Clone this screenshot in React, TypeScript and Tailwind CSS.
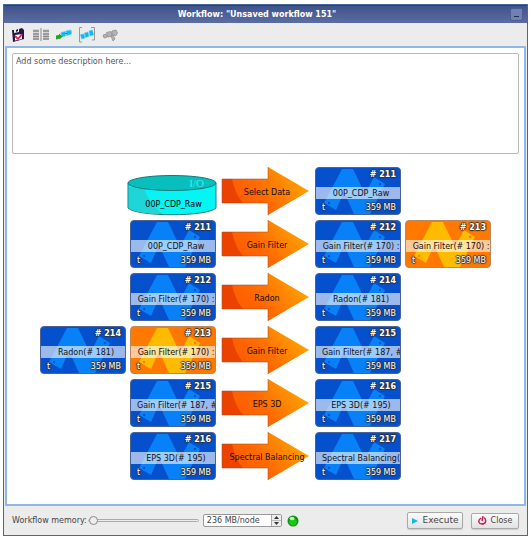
import React, { useState } from "react";

type Tone = "blue" | "orange";
type Data = { id: number; label: string; tone?: Tone };
type Step = { extra?: Data; input?: Data; process: string; output: Data; branch?: Data };

const steps: Step[] = [
  { process: "Select Data", output: { id: 211, label: "00P_CDP_Raw" } },
  {
    input: { id: 211, label: "00P_CDP_Raw" },
    process: "Gain Filter",
    output: { id: 212, label: "Gain Filter(# 170) :" },
    branch: { id: 213, label: "Gain Filter(# 170) :", tone: "orange" },
  },
  { input: { id: 212, label: "Gain Filter(# 170) :" }, process: "Radon", output: { id: 214, label: "Radon(# 181)" } },
  {
    extra: { id: 214, label: "Radon(# 181)" },
    input: { id: 213, label: "Gain Filter(# 170) :", tone: "orange" },
    process: "Gain Filter",
    output: { id: 215, label: "Gain Filter(# 187, #" },
  },
  { input: { id: 215, label: "Gain Filter(# 187, #" }, process: "EPS 3D", output: { id: 216, label: "EPS 3D(# 195)" } },
  { input: { id: 216, label: "EPS 3D(# 195)" }, process: "Spectral Balancing", output: { id: 217, label: "Spectral Balancing(" } },
];

const outline = "[text-shadow:1px_0_1px_#333,-1px_0_1px_#333,0_1px_1px_#333,0_-1px_1px_#333]";

function DataCard({ id, label, tone = "blue" }: Data) {
  const orange = tone === "orange";
  return (
    <div
      className={`relative h-12 overflow-hidden rounded border ${
        orange ? "border-[#b9855c] bg-[#ff7800]" : "border-[#4a6296] bg-[#0550cc]"
      }`}
    >
      <svg viewBox="0 0 86 48" className="absolute -inset-px h-12 w-[86px]" aria-hidden="true">
        <path d="M27 2H38L50 27L59 10L70 17L55 47H39L29 25L21 43L9 36Z" fill={orange ? "#ffbb00" : "#0880f8"} />
        <g fill={orange ? "#ff7800" : "#0550cc"}>
          <circle cx="14" cy="36" r="1.2" />
          <circle cx="65" cy="17" r="1.2" />
        </g>
      </svg>
      <div className="relative flex h-full flex-col">
        <div className={`h-[19px] pr-1 text-right font-bold leading-[13px] text-white ${outline}`}># {id}</div>
        <div className="flex h-3 overflow-hidden bg-white/60 pl-1.5 leading-[13px] text-[#111]">
          <span className="mx-auto whitespace-nowrap">{label}</span>
        </div>
        <div className={`flex flex-1 items-end justify-between pl-1.5 pr-1 leading-3 text-white ${outline}`}>
          <span>t</span>
          <span>359 MB</span>
        </div>
      </div>
    </div>
  );
}

function Source() {
  return (
    <div className="relative -ml-[3px] h-12">
      <svg viewBox="0 0 90 49" className="absolute inset-0 h-[49px] w-[90px]" aria-hidden="true">
        <path d="M1 16V41C10 50 80 50 89 41V16Z" fill="#05f5f5" stroke="#287878" />
        <path d="M2 20V41C8 45 20 47 36 47Q25 40 17 22Z" fill="#20d5d8" />
        <ellipse cx="45" cy="16" rx="44" ry="7.5" fill="#08bfbd" stroke="#187878" />
      </svg>
      <div className="relative flex h-full flex-col justify-between pb-1 pt-2.5">
        <span className="pr-3 text-right font-['Liberation_Serif',serif] text-[11px] leading-3 text-[#3deeee]">I/O</span>
        <span className="pl-1 text-center leading-3 text-black">00P_CDP_Raw</span>
      </div>
    </div>
  );
}

function ProcessArrow({ label }: { label: string }) {
  return (
    <div className="relative flex h-12 items-center justify-center">
      <svg viewBox="0 0 91 48" className="absolute inset-0 h-12 w-[91px]" aria-hidden="true">
        <defs>
          <linearGradient id="arrowFill" x1="0" y1="0.7" x2="1" y2="0.3">
            <stop offset="0" stopColor="#ff5500" />
            <stop offset="0.45" stopColor="#ff6a00" />
            <stop offset="1" stopColor="#ffa800" />
          </linearGradient>
        </defs>
        <path d="M2 12H48V0L89 24L48 48V36H2Z" fill="url(#arrowFill)" />
        <path d="M2 12H12Q15 27 23 36H2Z" fill="#ec4200" />
        <path d="M2 12H48V0M2 12V36H48V48" fill="none" stroke="#a05030" strokeOpacity="0.55" />
      </svg>
      <span className="relative whitespace-nowrap pl-[3px] pt-1 leading-3 text-[#111]">{label}</span>
    </div>
  );
}

const toolIcons: { name: string; art: React.ReactNode }[] = [
  {
    name: "Save workflow",
    art: (
      <>
        <path d="M2 3L4 3V6L9 5V2L12 1L14 3V12L3 15Z" fill="#1f1b45" />
        <path d="M6 3L8 2V4L6 5Z" fill="#1f1b45" />
        <path d="M5 8L12 7V12L5 13.5Z" fill="#fff" />
        <path d="M5 9L8 12L12 7" fill="none" stroke="#ec1650" strokeWidth="1.8" />
      </>
    ),
  },
  {
    name: "Compare",
    art: (
      <>
        <path d="M0 2H6V13H0ZM10 2H16V13H10Z" fill="#d6d6d6" />
        <path d="M0 4H6M0 7H6M0 9.5H6M0 12H6M10 4H16M10 7H16M10 9.5H16M10 12H16" stroke="#888" strokeWidth="1.3" />
        <path d="M8 1V14" stroke="#888" />
      </>
    ),
  },
  {
    name: "Append step",
    art: (
      <>
        <path d="M5 5.5L9.5 4.5V9L5.5 10ZM10 4L15 3L15.500 7L10.500 8.500Z" fill="#12b4f5" stroke="#55cfff" strokeWidth="0.8" />
        <path d="M0 8.500L3 8V6.500L6.500 9.500L3.500 12.500V11.500L0 12.500Z" fill="#18a91c" />
        <path d="M9 6.500H11" stroke="#178abf" />
      </>
    ),
  },
  {
    name: "Select chain",
    art: (
      <>
        <path d="M3 0.5H0.5V15H3M12 0.5H15.5V13H13" fill="none" stroke="#999" />
        <path d="M1.500 7.500L5 7L6 11L2.500 12ZM5.500 6L9 5L10 9.500L6.500 10.500ZM10 4L13.500 3L14.500 8L11 9Z" fill="#12b4f5" stroke="#55cfff" strokeWidth="0.6" />
      </>
    ),
  },
  {
    name: "Disconnect",
    art: (
      <g fill="#b4b4b4" stroke="#8f8f8f" strokeWidth="0.8">
        <path d="M1 8L4 7L5.500 10L2 11Z" />
        <path d="M4.500 5.500L9 4.500L10 9L6 10Z" />
        <path d="M10 4L14 3L15.500 6L14 8.500L10 8Z" />
        <path d="M9 9L11 8L13 12L11 14Z" />
      </g>
    ),
  },
];

export default function App() {
  const [memory, setMemory] = useState(236);
  const buttonStyle =
    "flex items-center justify-center rounded-xs border border-[#a9a9a9] bg-linear-to-b from-[#fbfbfb] to-[#e2e2e2] shadow-[0_1px_1px_#ccc]";
  return (
    <div className="flex min-h-screen flex-col bg-white px-[3px] py-1 font-['DejaVu_Sans','Noto_Sans',sans-serif] text-[8px] text-[#444]">
      <main className="flex flex-1 flex-col border border-[#426a9f] bg-[#ececec]">
        <header className="flex h-[18px] items-center border-t border-[#333f63] bg-linear-to-b from-[#40538b] to-[#5b6da2] pr-1">
          <h1 className="flex-1 text-center font-bold leading-3 text-white">Workflow: "Unsaved workflow 151"</h1>
          <button aria-label="Minimize" className="flex h-[13px] w-[13px] items-end justify-center rounded-xs border border-[#4a5c92] bg-[#7181b3] pb-[3px]">
            <span className="h-px w-[5px] bg-[#222b50]" />
          </button>
        </header>

        <nav aria-label="Workflow tools" className="flex h-[23px] items-center gap-[7px] pl-[6px]">
          {toolIcons.map((tool) => (
            <button key={tool.name} aria-label={tool.name}>
              <svg viewBox="0 0 16 16" className="h-4 w-4">{tool.art}</svg>
            </button>
          ))}
        </nav>

        <section className="mx-px flex flex-1 flex-col border-2 border-[#8db9e8] bg-white px-[5px] pt-[5px]">
          <textarea
            aria-label="Description"
            placeholder="Add some description here..."
            className="h-[101px] w-full resize-none rounded-xs border border-[#b9b9b9] p-[3px] leading-[10px] outline-none placeholder:text-[#555]"
          />
          <div className="mt-[13px] flex flex-col items-center gap-[5px]">
            {steps.map((step) => (
              <div key={step.output.id} className="grid grid-cols-[86px_86px_91px_86px_86px] gap-1">
                {step.extra ? <DataCard {...step.extra} /> : <div />}
                {step.input ? <DataCard {...step.input} /> : <Source />}
                <ProcessArrow label={step.process} />
                <DataCard {...step.output} />
                {step.branch && <DataCard {...step.branch} />}
              </div>
            ))}
          </div>
        </section>

        <footer className="flex h-[29px] items-center pl-2 pr-2">
          <label htmlFor="memory">Workflow memory:</label>
          <input
            id="memory"
            type="range"
            min={236}
            max={8192}
            value={memory}
            onChange={(e) => setMemory(Number(e.target.value))}
            className="ml-px h-3 w-[111px] appearance-none bg-transparent [&::-webkit-slider-runnable-track]:h-[3px] [&::-webkit-slider-runnable-track]:rounded-full [&::-webkit-slider-runnable-track]:border [&::-webkit-slider-runnable-track]:border-[#aaa] [&::-webkit-slider-thumb]:-mt-[4px] [&::-webkit-slider-thumb]:h-[9px] [&::-webkit-slider-thumb]:w-[9px] [&::-webkit-slider-thumb]:appearance-none [&::-webkit-slider-thumb]:rounded-full [&::-webkit-slider-thumb]:border [&::-webkit-slider-thumb]:border-[#888] [&::-webkit-slider-thumb]:bg-[#eee]"
          />
          <div className="ml-1 flex h-[13px] w-[79px] rounded-xs border border-[#999] bg-white">
            <input
              aria-label="Memory per node"
              readOnly
              value={`${memory} MB/node`}
              className="min-w-0 flex-1 pl-[3px] leading-[10px] outline-none"
            />
            <div className="flex w-2.5 flex-col border-l border-[#aaa] bg-[#eee]">
              <button aria-label="Increase" onClick={() => setMemory(memory + 1)} className="flex flex-1 items-center justify-center border-b border-[#bbb]">
                <svg viewBox="0 0 5 3" className="h-[3px] w-[5px]"><path d="M0 3L2.5 0L5 3Z" fill="#333" /></svg>
              </button>
              <button aria-label="Decrease" onClick={() => setMemory(Math.max(236, memory - 1))} className="flex flex-1 items-center justify-center">
                <svg viewBox="0 0 5 3" className="h-[3px] w-[5px]"><path d="M0 0L2.5 3L5 0Z" fill="#333" /></svg>
              </button>
            </div>
          </div>
          <svg viewBox="0 0 12 12" className="ml-[5px] h-3 w-3" role="img" aria-label="Memory available">
            <circle cx="6" cy="6" r="5.5" fill="#0b9408" />
            <circle cx="6" cy="7" r="3.8" fill="#20c31a" />
            <ellipse cx="5" cy="3.5" rx="2.5" ry="1.8" fill="#b8f5a8" />
          </svg>
          <button className={`${buttonStyle} ml-auto h-[17px] w-[56px] gap-[5px] text-[9px]`}>
            <svg viewBox="0 0 6 6" className="h-1.5 w-1.5"><path d="M0 0L6 3L0 6Z" fill="#17b5e8" /></svg>
            Execute
          </button>
          <button className={`${buttonStyle} ml-2 h-4 w-12 gap-1`}>
            <svg viewBox="0 0 9 9" className="h-[9px] w-[9px]"><path d="M3 2C-1 5 1 8 4 8C8 8 9 4 6 1.5M5 0L4 5" fill="none" stroke="#cf1853" strokeWidth="1.4" /></svg>
            Close
          </button>
        </footer>
      </main>
    </div>
  );
}
